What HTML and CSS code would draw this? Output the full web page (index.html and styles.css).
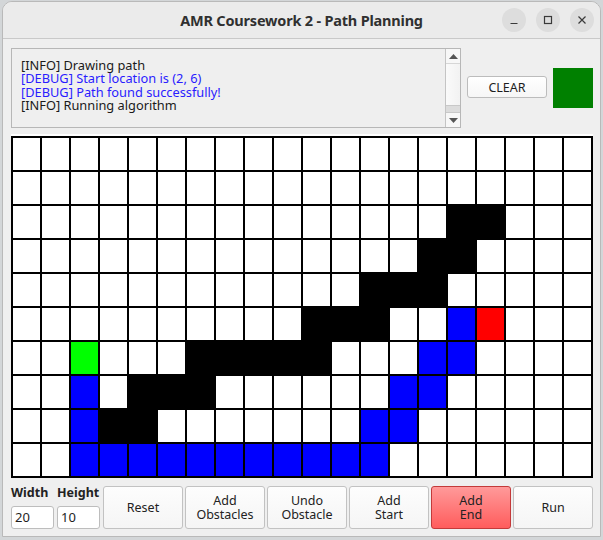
FILE: index.html
```html
<!DOCTYPE html>
<html>
<head>
<meta charset="utf-8">
<link rel="stylesheet" href="styles.css">
</head>
<body>
<div class="window">
  <div class="titlebar">
    <div class="title">AMR Coursework 2 - Path Planning</div>
    <div class="wbtns">
      <span class="wbtn"><svg width="10" height="10" viewBox="0 0 10 10"><path d="M1.5 8.5h7" stroke="#3a3a3a" stroke-width="1.2"/></svg></span>
      <span class="wbtn"><svg width="10" height="10" viewBox="0 0 10 10"><rect x="1.5" y="1.5" width="7" height="7" fill="none" stroke="#3a3a3a" stroke-width="1.2"/></svg></span>
      <span class="wbtn"><svg width="10" height="10" viewBox="0 0 10 10"><path d="M1.5 1.5l7 7M8.5 1.5l-7 7" stroke="#3a3a3a" stroke-width="1.2"/></svg></span>
    </div>
  </div>
  <div class="content">
    <div class="toprow">
      <div class="log">
        <div class="logtext">
          <div class="info">[INFO] Drawing path</div>
          <div class="debug">[DEBUG] Start location is (2, 6)</div>
          <div class="debug">[DEBUG] Path found successfully!</div>
          <div class="info">[INFO] Running algorithm</div>
        </div>
        <div class="scrollbar">
          <div class="sbtn"><svg width="9" height="5" viewBox="0 0 9 5"><path d="M0 5L4.5 0L9 5z" fill="#555"/></svg></div>
          <div class="track"></div>
          <div class="handle"></div>
          <div class="sbtn"><svg width="9" height="5" viewBox="0 0 9 5"><path d="M0 0L4.5 5L9 0z" fill="#555"/></svg></div>
        </div>
      </div>
      <button class="clear">CLEAR</button>
      <div class="status"></div>
    </div>
    <div class="panel">
      <div class="grid">
        <span></span><span></span><span></span><span></span><span></span><span></span><span></span><span></span><span></span><span></span><span></span><span></span><span></span><span></span><span></span><span></span><span></span><span></span><span></span><span></span>
        <span></span><span></span><span></span><span></span><span></span><span></span><span></span><span></span><span></span><span></span><span></span><span></span><span></span><span></span><span></span><span></span><span></span><span></span><span></span><span></span>
        <span></span><span></span><span></span><span></span><span></span><span></span><span></span><span></span><span></span><span></span><span></span><span></span><span></span><span></span><span></span><span class="o"></span><span class="o"></span><span></span><span></span><span></span>
        <span></span><span></span><span></span><span></span><span></span><span></span><span></span><span></span><span></span><span></span><span></span><span></span><span></span><span></span><span class="o"></span><span class="o"></span><span></span><span></span><span></span><span></span>
        <span></span><span></span><span></span><span></span><span></span><span></span><span></span><span></span><span></span><span></span><span></span><span></span><span class="o"></span><span class="o"></span><span class="o"></span><span></span><span></span><span></span><span></span><span></span>
        <span></span><span></span><span></span><span></span><span></span><span></span><span></span><span></span><span></span><span></span><span class="o"></span><span class="o"></span><span class="o"></span><span></span><span></span><span class="p"></span><span class="e"></span><span></span><span></span><span></span>
        <span></span><span></span><span class="s"></span><span></span><span></span><span></span><span class="o"></span><span class="o"></span><span class="o"></span><span class="o"></span><span class="o"></span><span></span><span></span><span></span><span class="p"></span><span class="p"></span><span></span><span></span><span></span><span></span>
        <span></span><span></span><span class="p"></span><span></span><span class="o"></span><span class="o"></span><span class="o"></span><span></span><span></span><span></span><span></span><span></span><span></span><span class="p"></span><span class="p"></span><span></span><span></span><span></span><span></span><span></span>
        <span></span><span></span><span class="p"></span><span class="o"></span><span class="o"></span><span></span><span></span><span></span><span></span><span></span><span></span><span></span><span class="p"></span><span class="p"></span><span></span><span></span><span></span><span></span><span></span><span></span>
        <span></span><span></span><span class="p"></span><span class="p"></span><span class="p"></span><span class="p"></span><span class="p"></span><span class="p"></span><span class="p"></span><span class="p"></span><span class="p"></span><span class="p"></span><span class="p"></span><span></span><span></span><span></span><span></span><span></span><span></span><span></span>
      </div>
    </div>
    <div class="bottomrow">
      <div class="field">
        <label class="flabel">Width</label>
        <div class="input">20</div>
      </div>
      <div class="field">
        <label class="flabel">Height</label>
        <div class="input">10</div>
      </div>
      <div class="buttons">
        <button class="btn">Reset</button>
        <button class="btn">Add<br>Obstacles</button>
        <button class="btn">Undo<br>Obstacle</button>
        <button class="btn">Add<br>Start</button>
        <button class="btn active">Add<br>End</button>
        <button class="btn">Run</button>
      </div>
    </div>
  </div>
</div>
</body>
</html>
```
FILE: styles.css
```css
html, body {
  margin: 0;
  padding: 0;
}
body {
  background: #d3d6d8;
  width: 603px;
  height: 540px;
  overflow: hidden;
  font-family: "Noto Sans", "DejaVu Sans", sans-serif;
}
.window {
  margin-left: 2px;
  margin-top: 1px;
  width: 597px;
  height: 534px;
  border: 1px solid #b9b9b9;
  border-radius: 10px 10px 0 0;
  background: #efefef;
  overflow: hidden;
}
.titlebar {
  height: 36px;
  background: #ebebeb;
  border-bottom: 1px solid #c9c9c9;
  display: flex;
  align-items: center;
  justify-content: center;
  position: relative;
}
.title {
  font-weight: bold;
  font-size: 14.5px;
  color: #303030;
  letter-spacing: -0.2px;
}
.wbtns {
  position: absolute;
  right: 6px;
  top: 6px;
  display: flex;
  gap: 10px;
}
.wbtn {
  width: 24px;
  height: 24px;
  border-radius: 50%;
  background: #dddddd;
  display: flex;
  align-items: center;
  justify-content: center;
}
.content {
  padding: 9px 0 0 8px;
}
.toprow {
  display: flex;
  align-items: center;
  height: 80px;
}
.log {
  box-sizing: border-box;
  width: 450px;
  height: 80px;
  border: 1px solid #b7b7b7;
  display: flex;
  background: #efefef;
}
.logtext {
  flex: 1;
  padding: 10px 0 0 9px;
  font-size: 12.8px;
  line-height: 13.4px;
}
.info { color: #1a1a1a; }
.debug { color: #2a1cff; }
.scrollbar {
  width: 14px;
  border-left: 1px solid #c4c4c4;
  display: flex;
  flex-direction: column;
  background: #fbfbfb;
}
.sbtn {
  height: 14px;
  display: flex;
  align-items: center;
  justify-content: center;
  background: #f7f7f7;
}
.sbtn:first-child { border-bottom: 1px solid #d6d6d6; }
.sbtn:last-child { border-top: 1px solid #c8c8c8; }
.track {
  flex: 1;
  background: linear-gradient(to right, #fafafa, #f2f2f2);
}
.handle {
  height: 6px;
  background: #dcdcdc;
  border-top: 1px solid #c8c8c8;
}
.clear {
  margin-left: 6px;
  width: 80px;
  height: 22px;
  border: 1px solid #bcbcbc;
  border-radius: 3px;
  background: linear-gradient(#ffffff, #f6f6f6);
  font-family: "Noto Sans", sans-serif;
  font-size: 12.5px;
  color: #1e1e1e;
  padding: 0;
  margin-top: -2px;
}
.status {
  margin-left: 6px;
  width: 40px;
  height: 40px;
  background: #008000;
}
.panel {
  margin-top: 6px;
  width: 582px;
  padding-top: 2px;
  background: #ffffff;
}
.grid {
  display: grid;
  grid-template-columns: repeat(20, 27px);
  grid-auto-rows: 32px;
  gap: 2px;
  padding: 2px;
  background: #000;
  width: max-content;
}
.grid span { background: #fff; }
.grid .o { background: #000; }
.grid .p { background: #0000ff; }
.grid .s { background: #00ff00; }
.grid .e { background: #ff0000; }
.bottomrow {
  margin-top: 8px;
  display: flex;
  align-items: flex-end;
}
.field {
  display: flex;
  flex-direction: column;
  margin-right: 3px;
}
.flabel {
  font-weight: bold;
  font-size: 12.5px;
  color: #222;
  height: 20px;
  line-height: 14px;
}
.input {
  box-sizing: border-box;
  width: 43px;
  height: 23px;
  border: 1px solid #bdbdbd;
  border-radius: 3px;
  background: #fff;
  font-size: 13px;
  line-height: 21px;
  padding-left: 3px;
  color: #1e1e1e;
}
.buttons {
  display: flex;
  gap: 2px;
}
.btn {
  box-sizing: border-box;
  width: 80px;
  height: 43px;
  border: 1px solid #c2c2c2;
  border-radius: 3px;
  background: linear-gradient(#fdfdfd, #f5f5f5);
  font-family: "Noto Sans", sans-serif;
  font-size: 12.5px;
  line-height: 14px;
  color: #222;
  padding: 0;
}
.btn.active {
  background: linear-gradient(#ff9a9a, #ff5c5c);
  border-color: #c33a3a;
}
```
